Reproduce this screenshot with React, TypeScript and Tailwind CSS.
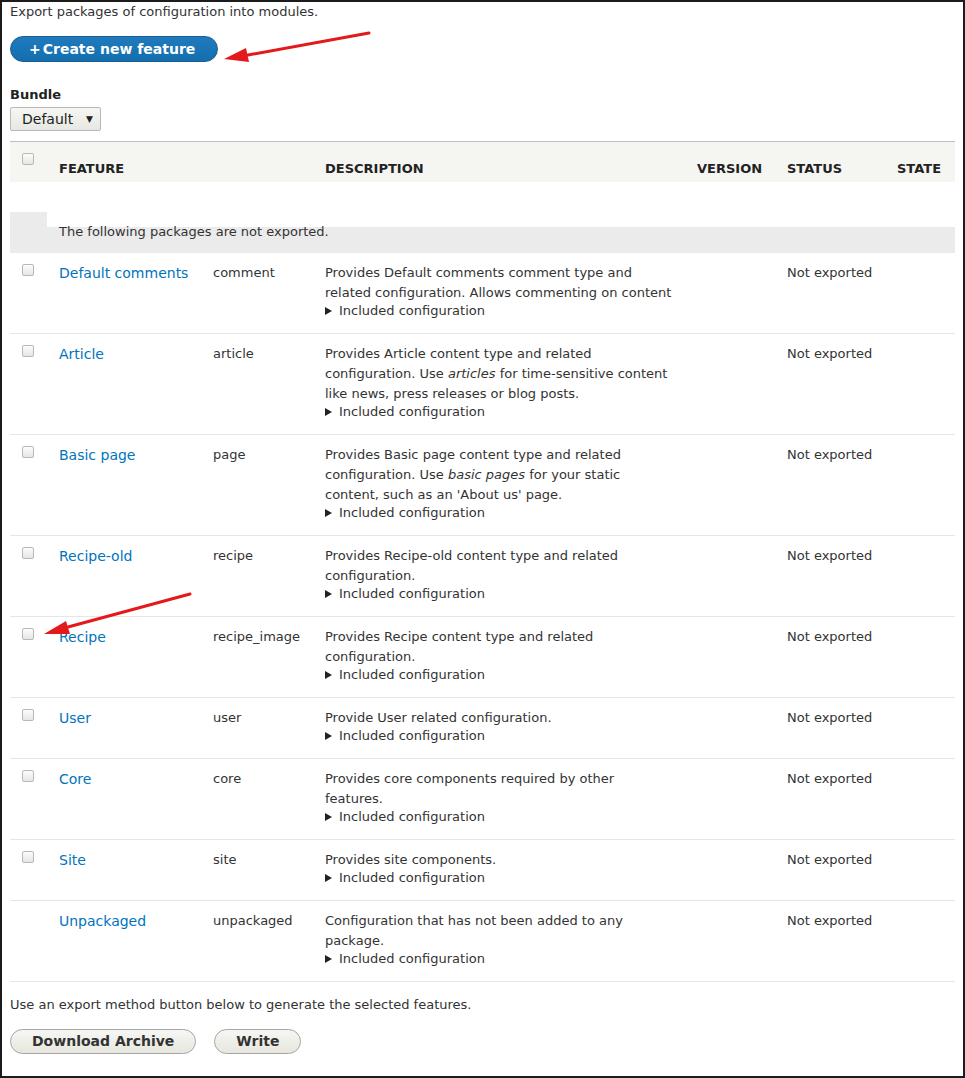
import { FC, ReactNode } from "react";

type Feature = {
    name: string;
    machine: string;
    description: ReactNode;
    checkbox?: boolean;
};

const features: Feature[] = [
    {
        name: "Default comments",
        machine: "comment",
        description:
            "Provides Default comments comment type and related configuration. Allows commenting on content",
    },
    {
        name: "Article",
        machine: "article",
        description: (
            <>
                Provides Article content type and related configuration. Use{" "}
                <em>articles</em> for time-sensitive content like news, press
                releases or blog posts.
            </>
        ),
    },
    {
        name: "Basic page",
        machine: "page",
        description: (
            <>
                Provides Basic page content type and related configuration. Use{" "}
                <em>basic pages</em> for your static content, such as an 'About
                us' page.
            </>
        ),
    },
    {
        name: "Recipe-old",
        machine: "recipe",
        description: "Provides Recipe-old content type and related configuration.",
    },
    {
        name: "Recipe",
        machine: "recipe_image",
        description: "Provides Recipe content type and related configuration.",
    },
    {
        name: "User",
        machine: "user",
        description: "Provide User related configuration.",
    },
    {
        name: "Core",
        machine: "core",
        description: "Provides core components required by other features.",
    },
    {
        name: "Site",
        machine: "site",
        description: "Provides site components.",
    },
    {
        name: "Unpackaged",
        machine: "unpackaged",
        description: "Configuration that has not been added to any package.",
        checkbox: false,
    },
];

const Checkbox: FC = () => (
    <span className="block w-[12px] h-[12px] rounded-[2px] border border-[#b8b8b8] bg-gradient-to-b from-[#fcfcfa] to-[#e6e6e3]" />
);

const Arrows: FC = () => (
    <svg
        className="absolute left-0 top-0 pointer-events-none"
        width="965"
        height="1078"
        viewBox="0 0 965 1078"
    >
        <line x1="367" y1="31" x2="246" y2="53" stroke="#e3191c" strokeWidth="3" strokeLinecap="round" />
        <polygon points="222,57 247,60 244,46" fill="#e3191c" />
        <line x1="188" y1="592" x2="66" y2="625" stroke="#e3191c" strokeWidth="3" strokeLinecap="round" />
        <polygon points="42,632 68,632 64,619" fill="#e3191c" />
    </svg>
);

const App: FC = () => {
    return (
        <div className="relative w-[965px] h-[1078px] border-2 border-[#1c1c1c] bg-white px-2 font-['DejaVu_Sans',sans-serif] text-[13px] leading-5 text-[#333]">
            <p>Export packages of configuration into modules.</p>

            <button className="mt-[14px] h-[26px] pl-[18px] pr-[22px] rounded-full border border-[#1e5c90] bg-gradient-to-b from-[#1f7bbd] to-[#136fae] text-white text-[14px] font-bold leading-[24px]">
                <span className="mr-[2px]">+</span>Create new feature
            </button>

            <label className="block mt-[23px] font-bold text-[#222]">Bundle</label>
            <div className="mt-[2px] flex items-center w-[91px] h-[24px] pl-[11px] pr-[7px] border border-[#b8b8b8] rounded-[2px] bg-gradient-to-b from-[#f6f6f3] to-[#e7e7e4] text-[14px] text-[#222]">
                <span className="flex-1">Default</span>
                <span className="text-[9px]">▼</span>
            </div>

            <div className="mt-[10px] border-t border-[#bfbfbf]">
                <div className="grid grid-cols-[37px_154px_112px_372px_90px_110px_70px] h-[40px] bg-[#f5f5f2] font-bold uppercase text-[#222]">
                    <div className="pl-3 pt-[11px]">
                        <Checkbox />
                    </div>
                    <div className="pl-3 pt-[17px]">Feature</div>
                    <div className="pl-3 pt-[17px]"></div>
                    <div className="pl-3 pt-[17px]">Description</div>
                    <div className="pl-3 pt-[17px]">Version</div>
                    <div className="pl-3 pt-[17px]">Status</div>
                    <div className="pl-3 pt-[17px]">State</div>
                </div>

                <div className="h-[30px]" />

                <div className="flex h-[41px]">
                    <div className="w-[37px] bg-[#ebebeb]" />
                    <div className="flex-1 flex flex-col">
                        <div className="h-[15px]" />
                        <div className="flex-1 bg-[#ebebeb]" />
                        <p className="absolute mt-[10px] pl-3">The following packages are not exported.</p>
                    </div>
                </div>

                {features.map(f => (
                    <div
                        key={f.name}
                        className="grid grid-cols-[37px_154px_112px_372px_90px_110px_70px] pt-[10px] pb-[13px] border-b border-[#e6e6e6]"
                    >
                        <div className="pl-3 pt-[1px]">
                            {f.checkbox !== false && <Checkbox />}
                        </div>
                        <div className="pl-3">
                            <a href="#" className="text-[14px] text-[#0074bd]">
                                {f.name}
                            </a>
                        </div>
                        <div className="pl-3">{f.machine}</div>
                        <div className="pl-3 pr-3">
                            <p>{f.description}</p>
                            <div className="flex items-center -mt-[1px] h-[18px]">
                                <svg width="7" height="8" viewBox="0 0 7 8" className="mr-[7px]">
                                    <polygon points="0,0 7,4 0,8" fill="#222" />
                                </svg>
                                Included configuration
                            </div>
                        </div>
                        <div className="pl-3"></div>
                        <div className="pl-3">Not exported</div>
                        <div className="pl-3"></div>
                    </div>
                ))}
            </div>

            <p className="mt-[13px]">
                Use an export method button below to generate the selected features.
            </p>

            <div className="mt-[14px] flex gap-[18px]">
                <button className="h-[25px] px-[21px] rounded-full border border-[#a6a6a6] bg-gradient-to-b from-[#f6f6f3] to-[#e7e7df] text-[14px] font-bold text-[#333] leading-[23px]">
                    Download Archive
                </button>
                <button className="h-[25px] px-[21px] rounded-full border border-[#a6a6a6] bg-gradient-to-b from-[#f6f6f3] to-[#e7e7df] text-[14px] font-bold text-[#333] leading-[23px]">
                    Write
                </button>
            </div>

            <Arrows />
        </div>
    );
};

export default App;
